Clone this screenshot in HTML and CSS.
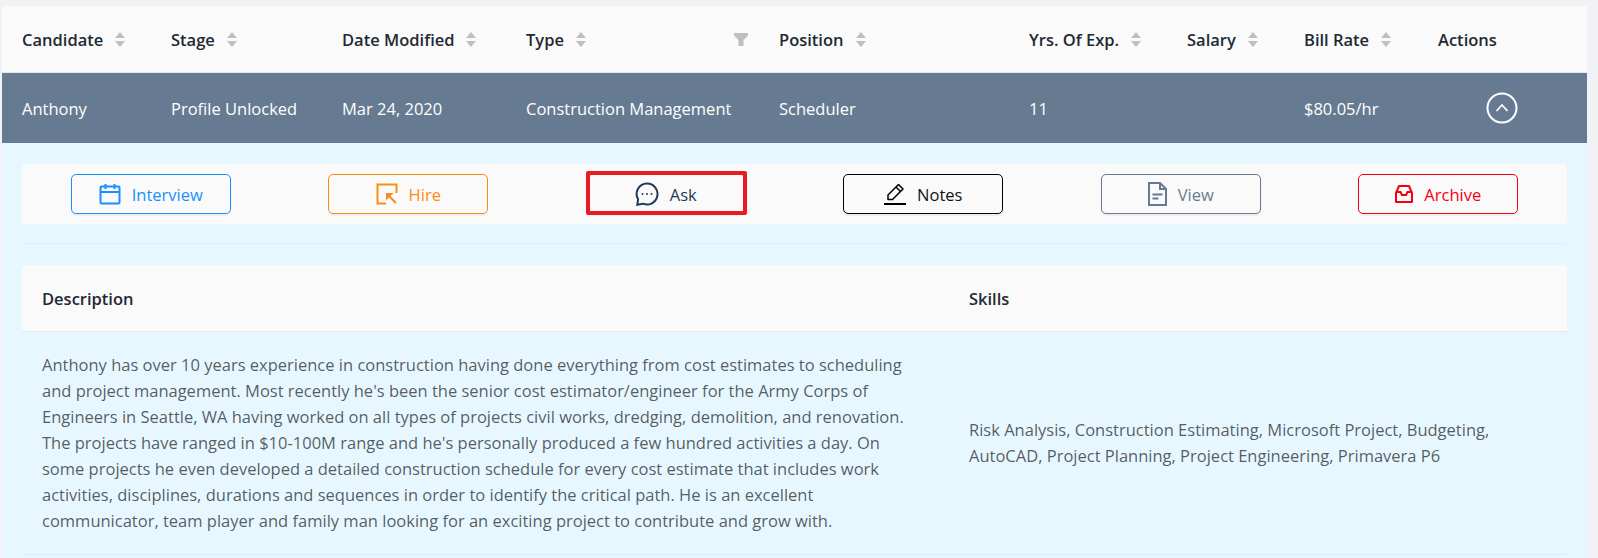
FILE: index.html
```html
<!DOCTYPE html>
<html lang="en">
<head>
  <meta charset="UTF-8" />
  <title>Candidates</title>
  <link rel="stylesheet" href="styles.css">
</head>
<body>
  <div class="wrap">
    <table class="main">
      <colgroup>
        <col class="c1"><col class="c2"><col class="c3"><col class="c4"><col class="c5"><col class="c6"><col class="c7"><col class="c8"><col class="c9">
      </colgroup>
      <thead>
        <tr>
          <th><div class="th-in">Candidate <span class="sorter"><i class="up"></i><i class="down"></i></span></div></th>
          <th><div class="th-in">Stage <span class="sorter"><i class="up"></i><i class="down"></i></span></div></th>
          <th><div class="th-in">Date Modified <span class="sorter"><i class="up"></i><i class="down"></i></span></div></th>
          <th class="has-filter"><div class="th-in">Type <span class="sorter"><i class="up"></i><i class="down"></i></span>
            <svg class="filter" width="14" height="13" viewBox="0 0 14 13"><path d="M0 0h14v2.5L9.5 7v6h-5V7L0 2.5z" fill="#bfbfbf"/></svg></div></th>
          <th><div class="th-in">Position <span class="sorter"><i class="up"></i><i class="down"></i></span></div></th>
          <th><div class="th-in">Yrs. Of Exp. <span class="sorter"><i class="up"></i><i class="down"></i></span></div></th>
          <th><div class="th-in">Salary <span class="sorter"><i class="up"></i><i class="down"></i></span></div></th>
          <th><div class="th-in">Bill Rate <span class="sorter"><i class="up"></i><i class="down"></i></span></div></th>
          <th><div class="th-in">Actions</div></th>
        </tr>
      </thead>
      <tbody>
        <tr class="selected">
          <td>Anthony</td>
          <td>Profile Unlocked</td>
          <td>Mar 24, 2020</td>
          <td>Construction Management</td>
          <td>Scheduler</td>
          <td>11</td>
          <td></td>
          <td>$80.05/hr</td>
          <td class="action-cell">
            <svg width="32" height="32" viewBox="0 0 32 32" fill="none" stroke="#fff"><circle cx="16" cy="16" r="14.500" stroke-width="2"/><path d="M10.500 19 16 13l5.500 6" stroke-width="1.800"/></svg>
          </td>
        </tr>
      </tbody>
    </table>

    <div class="expanded">
      <div class="btn-bar">
        <a class="btn btn-blue">
          <svg width="22" height="22" viewBox="0 0 22 22" fill="none" stroke="currentColor" stroke-width="2"><rect x="1.500" y="3.500" width="19" height="17" rx="1"/><path d="M1.500 9h19M6.500 1v5M15.500 1v5"/></svg>
          Interview</a>
        <a class="btn btn-orange">
          <svg width="22" height="22" viewBox="0 0 22 22" fill="none" stroke="currentColor" stroke-width="2"><path d="M10 20.500H1.500v-19h19V10"/><path d="M20 20 11.500 11.500"/><path d="M10 17.500V10h7.500z" stroke="none" fill="currentColor"/></svg>
          Hire</a>
        <a class="btn btn-dark">
          <span class="red-box"></span>
          <svg width="24" height="24" viewBox="0 0 24 24" fill="none" stroke="#1d3a58" stroke-width="2"><path d="M12 1.500a10.500 10.500 0 1 1-4 20.200l-5.700 1 .8-5.400A10.500 10.500 0 0 1 12 1.500z"/><circle cx="7.500" cy="12" r="1" fill="#1d3a58" stroke="none"/><circle cx="12" cy="12" r="1" fill="#1d3a58" stroke="none"/><circle cx="16.500" cy="12" r="1" fill="#1d3a58" stroke="none"/></svg>
          Ask</a>
        <a class="btn btn-black">
          <svg width="22" height="22" viewBox="0 0 22 22" fill="none" stroke="#000" stroke-width="1.500"><path d="M0 21h22" stroke-width="2"/><path d="M4 16.500v-4.500L14.500 1.500l4.500 4.500L8.500 16.500z" stroke-linejoin="round"/><path d="M12 4l4.500 4.500"/></svg>
          Notes</a>
        <a class="btn btn-gray">
          <svg width="19" height="24" viewBox="0 0 19 24" fill="none" stroke="currentColor" stroke-width="2"><path d="M1 1h11l6 6v16H1z"/><path d="M12 1v6h6"/><path d="M4.500 12.500h10M4.500 16.500h6"/></svg>
          View</a>
        <a class="btn btn-red">
          <svg width="18" height="18" viewBox="0 0 18 18" fill="none" stroke="currentColor" stroke-width="2"><path d="M4 1h10l3 7v9H1V8z" stroke-linejoin="round"/><path d="M1 7h4.500l1.500 3h4l1.500-3H17"/></svg>
          Archive</a>
      </div>
      <div class="divider"></div>

      <table class="inner">
        <colgroup><col class="ci1"><col class="ci2"></colgroup>
        <thead>
          <tr><th>Description</th><th>Skills</th></tr>
        </thead>
        <tbody>
          <tr>
            <td>Anthony has over 10 years experience in construction having done everything from cost estimates to scheduling and project management. Most recently he's been the senior cost estimator/engineer for the Army Corps of Engineers in Seattle, WA having worked on all types of projects civil works, dredging, demolition, and renovation. The projects have ranged in $10-100M range and he's personally produced a few hundred activities a day. On some projects he even developed a detailed construction schedule for every cost estimate that includes work activities, disciplines, durations and sequences in order to identify the critical path. He is an excellent communicator, team player and family man looking for an exciting project to contribute and grow with.</td>
            <td>Risk Analysis, Construction Estimating, Microsoft Project, Budgeting, AutoCAD, Project Planning, Project Engineering, Primavera P6</td>
          </tr>
        </tbody>
      </table>
    </div>
  </div>
</body>
</html>
```

FILE: styles.css
```css
html, body {
  height: 100%;
  overflow: hidden;
}
body {
  margin: 0;
  background: #f0f2f5;
  font-family: "Open Sans", "Liberation Sans", sans-serif;
  font-size: 16.5px;
  color: rgba(0,0,0,0.65);
}
.wrap {
  width: 1585px;
  height: 552px;
  margin: 6px 0 0 2px;
  overflow: hidden;
  background: #e6f7ff;
}
table {
  width: 100%;
  border-collapse: collapse;
  table-layout: fixed;
}
th {
  text-align: left;
  font-weight: 600;
  color: #1f2933;
  background: #fafafa;
}
.c1 { width: 149px; }
.c2 { width: 171px; }
.c3 { width: 184px; }
.c4 { width: 253px; }
.c5 { width: 250px; }
.c6 { width: 158px; }
.c7 { width: 117px; }
.c8 { width: 134px; }
.c9 { width: 169px; }

.main th {
  height: 66px;
  padding: 0 0 0 20px;
  border-bottom: 1px solid #e8e8e8;
}
.th-in {
  display: flex;
  align-items: center;
  gap: 12px;
}
.sorter {
  display: flex;
  flex-direction: column;
  gap: 3px;
}
.sorter i {
  display: block;
  width: 0;
  height: 0;
  border-left: 5px solid transparent;
  border-right: 5px solid transparent;
}
.sorter .up { border-bottom: 6px solid #bfbfbf; }
.sorter .down { border-top: 6px solid #bfbfbf; }
.filter { margin-left: auto; margin-right: 11px; }

.selected td {
  height: 70px;
  padding: 0 0 0 20px;
  background: #667b91;
  color: #fff;
}
.action-cell svg { display: block; margin-left: 48px; }

.expanded {
  padding: 21px 20px 0 20px;
}
.btn-bar {
  display: flex;
  justify-content: space-around;
  align-items: center;
  height: 60px;
  background: #fafafa;
  border-radius: 4px;
}
.btn {
  position: relative;
  display: flex;
  align-items: center;
  justify-content: center;
  gap: 11px;
  width: 160px;
  height: 40px;
  box-sizing: border-box;
  border: 1px solid;
  border-radius: 5px;
  background: #fafafa;
  box-shadow: 0 2px 2px rgba(0,0,0,0.06);
}
.btn-blue { color: #1890ff; border-color: #1890ff; }
.btn-orange { color: #fa8c16; border-color: #fa8c16; }
.btn-dark { color: #1d3a58; border-color: #1d3a58; }
.btn-black { color: #111; border-color: #000; }
.btn-gray { color: #667b91; border-color: #667b91; }
.btn-red { color: #f5000f; border-color: #f5000f; }
.red-box {
  position: absolute;
  top: -4px;
  left: -1px;
  right: -2px;
  bottom: -2px;
  border: 4px solid #e81c1f;
  border-radius: 2px;
}
.divider {
  height: 1px;
  margin: 19px 0 21px;
  background: #e3edf2;
}
.ci1 { width: 927px; }
.inner th {
  height: 66px;
  padding: 0 20px;
  border-bottom: 1px solid #e8e8e8;
}
.inner th:first-child { border-top-left-radius: 4px; }
.inner th:last-child { border-top-right-radius: 4px; }
.inner td {
  padding: 20px 30px 20px 20px;
  line-height: 26px;
  border-bottom: 1px solid #e8e8e8;
}
```
